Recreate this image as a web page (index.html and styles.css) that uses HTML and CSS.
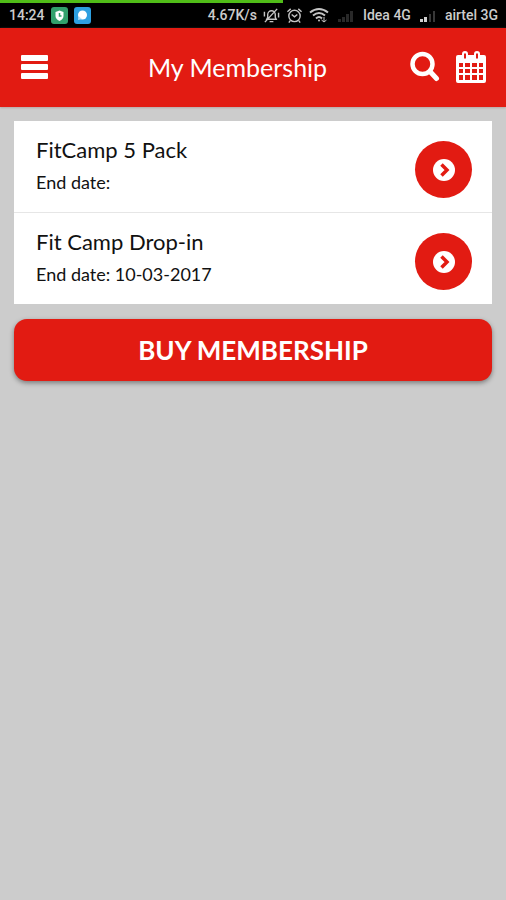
FILE: index.html
```html
<!DOCTYPE html>
<html lang="en">
<head>
<meta charset="utf-8">
<meta name="viewport" content="width=device-width, initial-scale=1">
<title>My Membership</title>
<link rel="stylesheet" href="styles.css">
</head>
<body>
<div class="status">
  <div class="load"></div>
  <div class="status-row">
    <div class="status-group">
      <span>14:24</span>
      <svg class="app-icon" viewBox="0 0 17 17" aria-hidden="true"><rect width="17" height="17" rx="3" fill="#32a06c"/><path d="M8.500 3.500l4 1.500v4q0 3-4 5-4-2-4-5V5z" fill="#fff"/><path d="M8.500 6v3h2" fill="none" stroke="#32a06c" stroke-width="1.500"/></svg>
      <svg class="app-icon" viewBox="0 0 17 17" aria-hidden="true"><rect width="17" height="17" rx="3" fill="#2d9fe0"/><circle cx="8.500" cy="8" r="4.500" fill="#fff"/><path d="M4.500 9l-.5 4 4-1z" fill="#b9e0f7"/></svg>
    </div>
    <div class="status-group">
      <span>4.67K/s</span>
      <svg class="glyph" viewBox="0 0 18 18" fill="none" stroke="#c4c4c4" stroke-width="1.500" aria-hidden="true"><path d="M4 13h10l-1-2V8a4 4 0 0 0-8 0v3zM7 15.500h4M2 16L15 2M1.500 5v5M16.500 6v5"/></svg>
      <svg class="glyph" viewBox="0 0 18 18" fill="none" stroke="#c4c4c4" stroke-width="1.500" aria-hidden="true"><circle cx="9" cy="9.500" r="6"/><path d="M6 8l3 2.500L12 8M1.500 5L5 2M16.500 5L13 2M4.500 14.500L3 16.500M13.500 14.500l1.500 2"/></svg>
      <div class="status-group networks">
        <svg class="wifi" viewBox="0 0 20 18" fill="none" stroke="#c4c4c4" stroke-width="2" aria-hidden="true"><path d="M1 6.500q9-7 18 0M4 9.500q6-5 12 0M7 12.500q3-3 6 0"/><circle cx="10" cy="14.500" r="1" fill="#c4c4c4" stroke="none"/><path d="M15 11v5M12.500 14l2.500 2 2.500-2" stroke-width="1"/></svg>
        <svg class="signal" viewBox="0 0 18 18" fill="#292929" aria-hidden="true"><path d="M1 16v-3h3v3zM5 16v-5h3v5zM9 16V8h3v8zM13 16V5h3v11z"/></svg>
        <span>Idea 4G</span>
        <svg class="signal" viewBox="0 0 18 18" aria-hidden="true"><path d="M1 16v-3h3v3zM5 16v-5h3v5z" fill="#d0d0d0"/><path d="M10 16V8h2v8zM14 16V5h2v11z" fill="#383838"/></svg>
        <span>airtel 3G</span>
      </div>
    </div>
  </div>
</div>
<header class="bar">
  <button class="icon-button" type="button" aria-label="Menu">
    <svg class="menu-icon" viewBox="0 0 27 24" fill="#fff" aria-hidden="true"><rect y="0" width="27" height="6" rx="1"/><rect y="9" width="27" height="6" rx="1"/><rect y="18" width="27" height="6" rx="1"/></svg>
  </button>
  <h1 class="title">My Membership</h1>
  <div class="actions">
    <button class="icon-button" type="button" aria-label="Search">
      <svg class="action-icon" viewBox="0 0 30 32" fill="none" stroke="#fff" aria-hidden="true"><circle cx="12.500" cy="13" r="10" stroke-width="4.500"/><path d="M20 20.500l6.500 7" stroke-width="5" stroke-linecap="round"/></svg>
    </button>
    <button class="icon-button" type="button" aria-label="Calendar">
      <svg class="action-icon" viewBox="0 0 30 32" aria-hidden="true"><path fill="#fff" fill-rule="evenodd" d="M2 4h4V3q0-3 3-3t3 3v1h6V3q0-3 3-3t3 3v1h4q2 0 2 2v24q0 2-2 2H2q-2 0-2-2V6q0-2 2-2zM8 2.500v5h2v-5zM20 2.500v5h2v-5zM3 12v4h4v-4zM9 12v4h5v-4zM16 12v4h5v-4zM23 12v4h4v-4zM3 18v4h4v-4zM9 18v4h5v-4zM16 18v4h5v-4zM23 18v4h4v-4zM3 24v5h4v-5zM9 24v5h5v-5zM16 24v5h5v-5zM23 24v5h4v-5z"/></svg>
    </button>
  </div>
</header>
<main class="content">
  <ul class="list">
    <li class="item">
      <div>
        <h2 class="name">FitCamp 5 Pack</h2>
        <p class="date">End date:</p>
      </div>
      <button class="go" type="button" aria-label="Open FitCamp 5 Pack">
        <svg class="go-icon" viewBox="0 0 22 22" aria-hidden="true"><circle cx="11" cy="11" r="11" fill="#fff"/><path d="M8.500 5.500L14 11l-5.500 5.500" fill="none" stroke="#e21b12" stroke-width="3.500"/></svg>
      </button>
    </li>
    <li class="item">
      <div>
        <h2 class="name">Fit Camp Drop-in</h2>
        <p class="date">End date: 10-03-2017</p>
      </div>
      <button class="go" type="button" aria-label="Open Fit Camp Drop-in">
        <svg class="go-icon" viewBox="0 0 22 22" aria-hidden="true"><circle cx="11" cy="11" r="11" fill="#fff"/><path d="M8.500 5.500L14 11l-5.500 5.500" fill="none" stroke="#e21b12" stroke-width="3.500"/></svg>
      </button>
    </li>
  </ul>
  <button class="buy" type="button">BUY MEMBERSHIP</button>
</main>
</body>
</html>
```
FILE: styles.css
```css
* {
  box-sizing: border-box;
}

body {
  margin: 0;
  min-height: 100vh;
  background: #ccc;
  color: #111;
  font-family: Lato, "Liberation Sans", sans-serif;
}

button {
  margin: 0;
  padding: 0;
  border: 0;
  font-family: inherit;
  cursor: pointer;
}

svg {
  display: block;
}

.status {
  height: 28px;
  background: #000;
  color: #ccc;
  font: 500 14px/24px Roboto, sans-serif;
}

.load {
  width: 56%;
  height: 3px;
  background: #50bd18;
}

.status-row {
  display: flex;
  justify-content: space-between;
  padding: 0 8px 0 9px;
}

.status-group {
  display: flex;
  align-items: center;
  gap: 6px;
}

.networks {
  gap: 8px;
}

.app-icon,
.glyph {
  width: 17px;
  height: 17px;
}

.signal {
  width: 18px;
  height: 18px;
}

.wifi {
  width: 20px;
  height: 18px;
}

.bar {
  display: grid;
  grid-template-columns: 44px 1fr auto;
  align-items: center;
  height: 79px;
  padding: 0 20px 2px 21px;
  background: #e21b12;
  box-shadow: 0 1px 2px #b9a5a3;
}

.icon-button {
  justify-self: start;
  background: none;
}

.menu-icon {
  width: 27px;
  height: 24px;
}

.title {
  margin: 0;
  color: #fff;
  font-size: 25px;
  font-weight: 400;
  line-height: 32px;
  text-align: center;
}

.actions {
  display: flex;
  gap: 16px;
}

.action-icon {
  width: 30px;
  height: 32px;
}

.content {
  padding: 14px;
}

.list {
  margin: 0 0 15px;
  padding: 0;
  background: #fff;
  list-style: none;
}

.item {
  display: flex;
  align-items: flex-start;
  justify-content: space-between;
  padding: 13px 20px 14px 22px;
}

.item + .item {
  border-top: 1px solid #e6e6e6;
}

.name {
  margin: 0 0 4px;
  font-size: 22px;
  font-weight: 400;
  line-height: 32px;
}

.date {
  margin: 0;
  font-size: 18px;
  line-height: 24px;
}

.go {
  display: grid;
  place-items: center;
  width: 57px;
  height: 57px;
  margin-top: 7px;
  border-radius: 50%;
  background: #e21b12;
}

.go-icon {
  width: 22px;
  height: 22px;
}

.buy {
  display: block;
  width: 100%;
  padding: 15px;
  border-radius: 13px;
  background: #e21b12;
  box-shadow: 0 2px 5px rgba(0, 0, 0, 0.4);
  color: #fff;
  font-size: 26px;
  font-weight: 700;
  line-height: 32px;
}
```
